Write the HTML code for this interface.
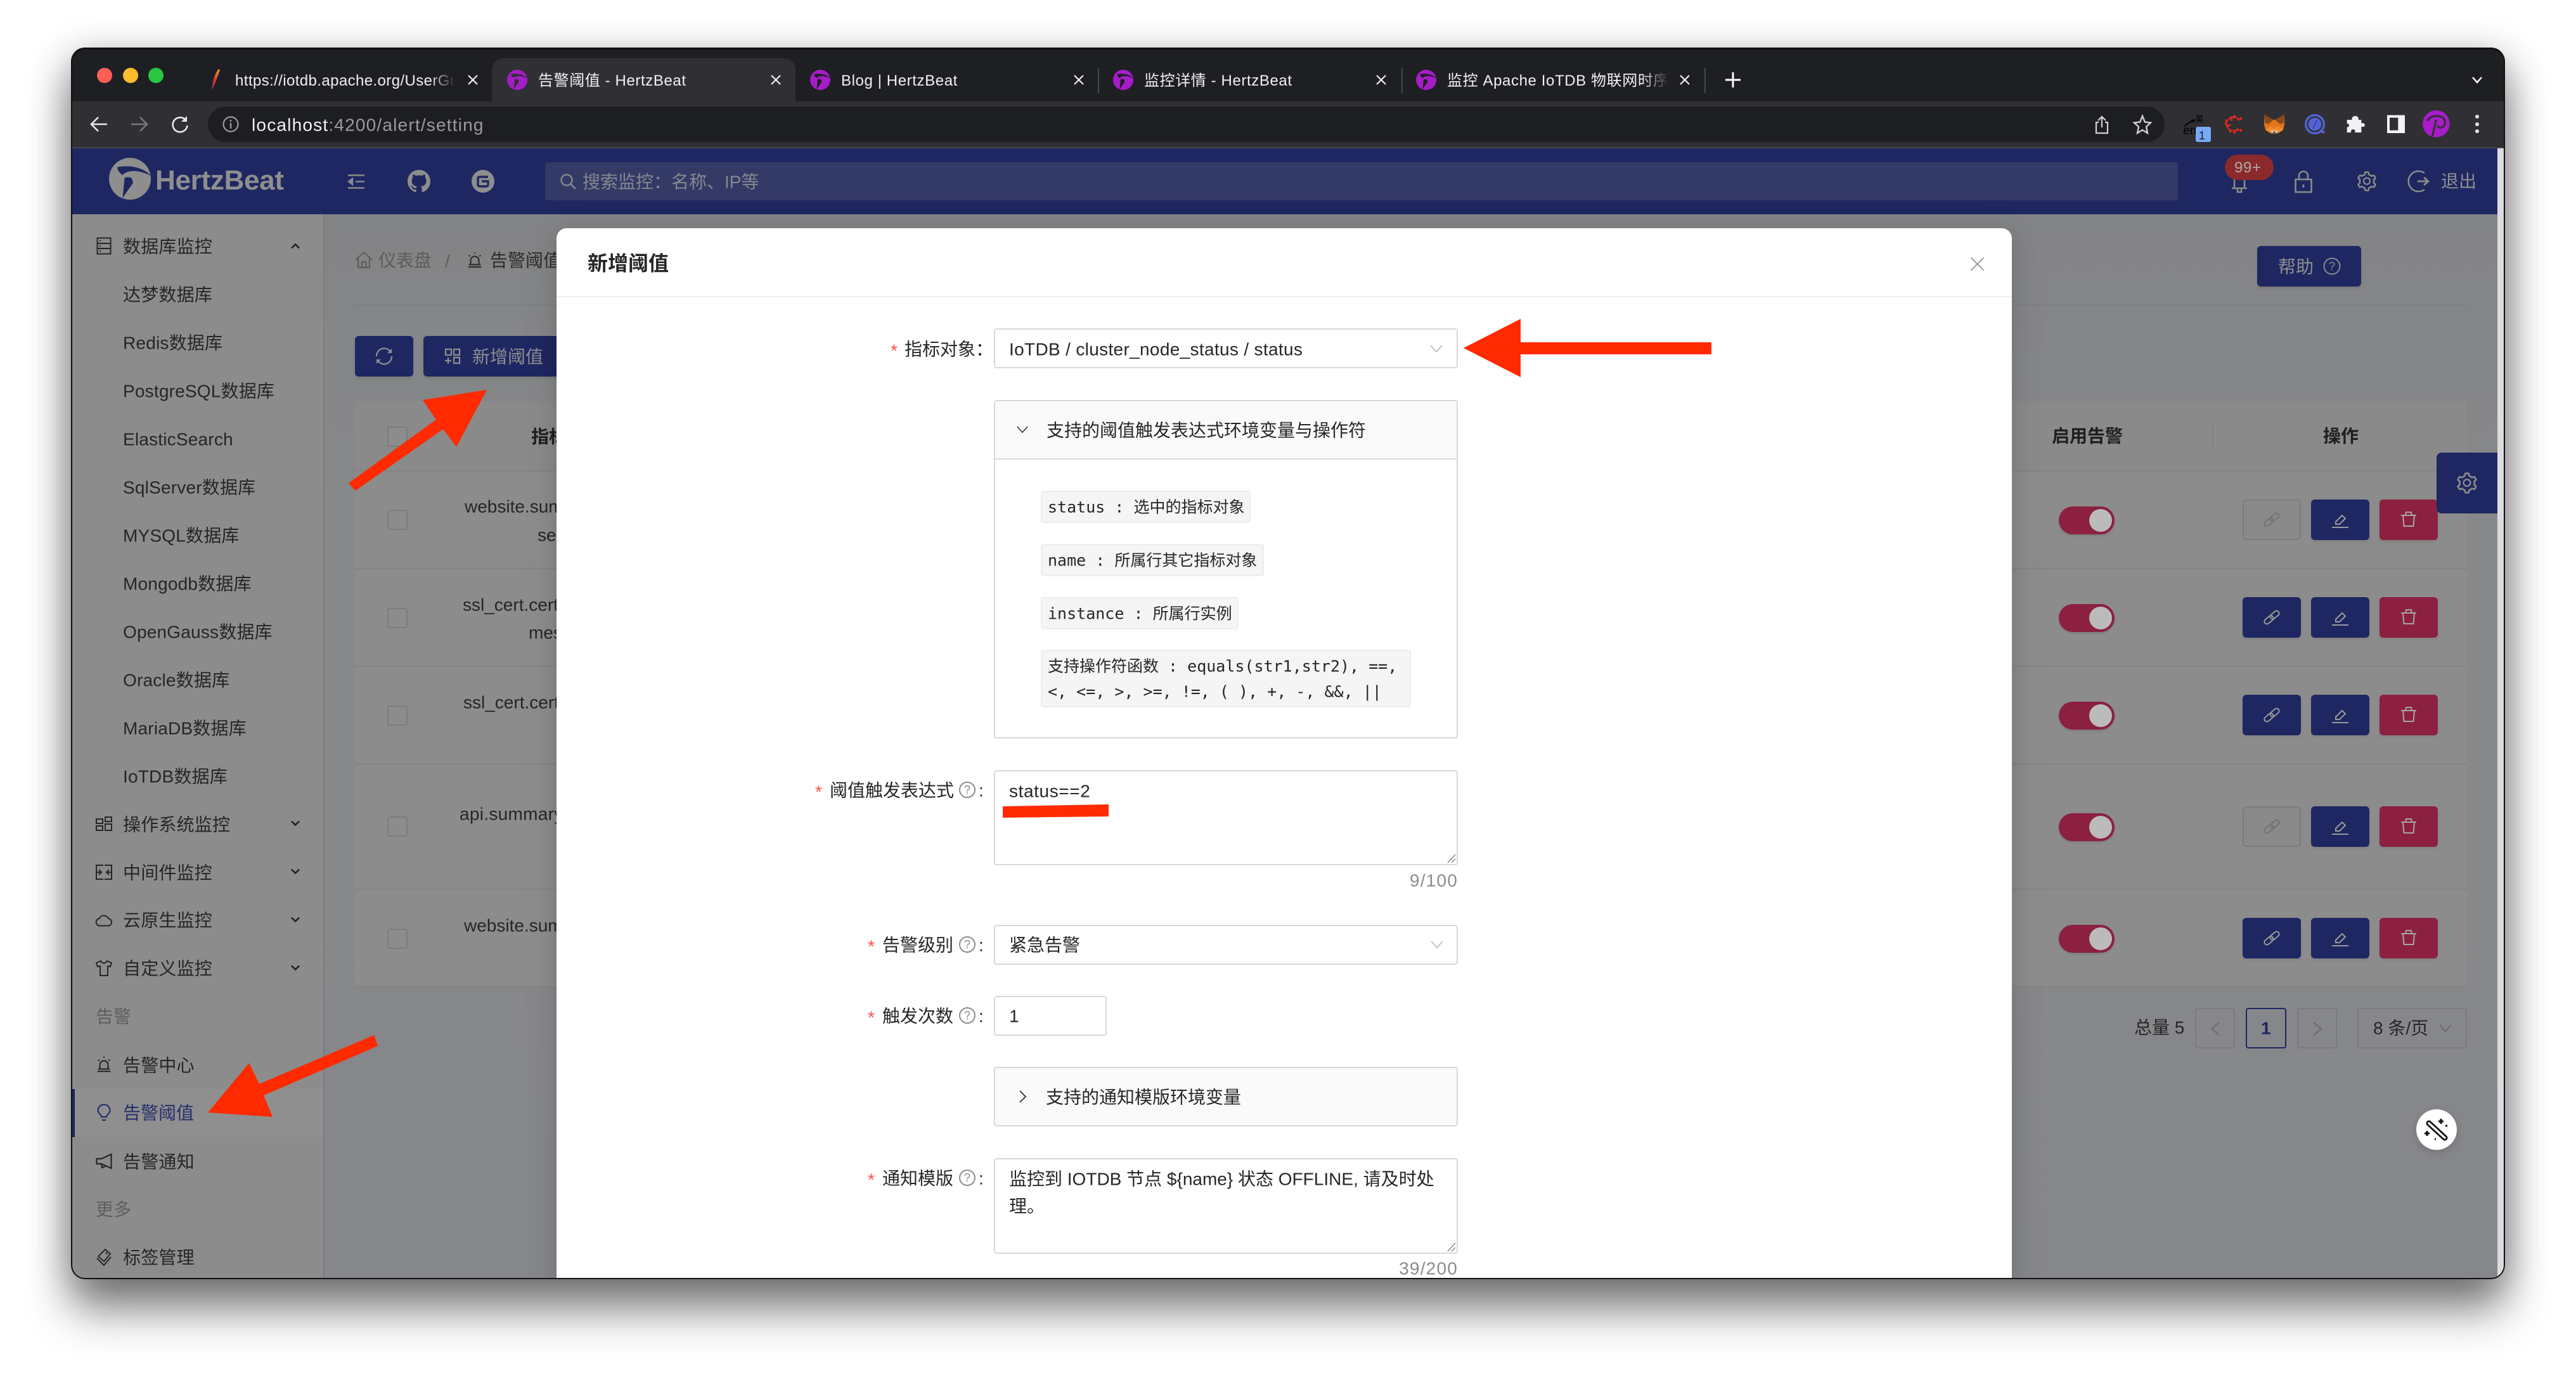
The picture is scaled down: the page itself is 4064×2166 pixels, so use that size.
<!DOCTYPE html>
<html lang="zh-CN">
<head>
<meta charset="utf-8">
<title>告警阈值 - HertzBeat</title>
<style>
html,body{margin:0;padding:0;width:4064px;height:2166px;background:#fff;overflow:hidden}
*{box-sizing:border-box}
body{font-family:"Liberation Sans","Noto Sans CJK SC",sans-serif;font-size:28px;color:#262626}
.shadow{position:absolute;left:112px;top:75px;width:3840px;height:1943px;border-radius:22px;box-shadow:0 50px 70px rgba(0,0,0,.45),0 10px 60px rgba(0,0,0,.28)}
.win{position:absolute;left:0;top:0;width:4064px;height:2166px;clip-path:inset(75px 112px 148px 112px round 22px);overflow:hidden}
.b{position:absolute}
.t{position:absolute;white-space:nowrap;transform:translateY(calc(-50% + 1.5px));line-height:1.3}
.tab{color:#f0f0f0;font-size:24px;letter-spacing:.6px}
.fade{overflow:hidden;-webkit-mask-image:linear-gradient(to right,#000 88%,transparent);mask-image:linear-gradient(to right,#000 88%,transparent)}
.ic{position:absolute;overflow:visible}
.sb{color:#262626;letter-spacing:.2px}
.chk{position:absolute;left:611px;width:32px;height:32px;border:2px solid #7b7b7b;border-radius:4px;background:#8c8c8c}
.line{position:absolute;left:560px;width:3332px;height:2px;background:#838383}
.sw{position:absolute;left:3248px;width:88px;height:44px;border-radius:22px;background:#8c2040;box-shadow:0 2px 3px rgba(0,0,0,.12)}
.sw i{position:absolute;right:4px;top:4px;width:36px;height:36px;border-radius:50%;background:#bbb}
.btn{position:absolute;width:92px;height:64px;border-radius:6px;box-shadow:0 3px 4px rgba(0,0,0,.08)}
.ln{left:3538px;background:#1e2761}.ed{left:3646px;background:#1e2761}.de{left:3754px;background:#8c2040}
.dis{background:#8a8a8a;border:2px solid #7b7b7b;box-shadow:none}
.pg{position:absolute;top:1590px;height:64px;border:2px solid #7b7b7b;border-radius:4px}
.modal{position:absolute;left:878px;top:360px;width:2296px;height:1700px;background:#fff;border-radius:16px;box-shadow:0 12px 48px 16px rgba(0,0,0,.05),0 9px 28px rgba(0,0,0,.08),0 6px 16px -8px rgba(0,0,0,.12)}
.fld{position:absolute;left:1568px;width:732px;background:#fff;border:2px solid #d9d9d9;border-radius:4px}
.star{color:#ff4d4f;font-family:"Liberation Sans",sans-serif}
.q{position:absolute;width:26px;height:26px;border:2px solid #8c8c8c;border-radius:50%;font-size:18px;line-height:22px;text-align:center;color:#8c8c8c}
.code{position:absolute;left:1642px;background:#f5f5f5;border:2px solid #ededed;border-radius:4px}
.m{font-family:"DejaVu Sans Mono","Liberation Mono","Noto Sans CJK SC",monospace;font-size:25px;color:#262626}
.cnt{color:#8c8c8c;letter-spacing:1.2px}
</style>
</head>
<body>
<svg width="0" height="0" style="position:absolute">
<defs>
<symbol id="hb" viewBox="21 26 198 198"><circle cx="120" cy="125" r="99" fill="currentColor"/><path fill="var(--b)" d="M60 70C100 62 170 60 222 112C190 96 150 84 120 90C105 92 90 100 85 108C75 100 62 90 60 70Z"/><path fill="var(--b)" d="M95 120C110 115 125 118 130 125L135 145C125 160 105 185 85 218Z"/></symbol>
<symbol id="gear" viewBox="0 0 1024 1024"><path fill="currentColor" d="M924.8 625.7l-65.5-56c3.1-19 4.7-38.4 4.7-57.8s-1.6-38.8-4.7-57.8l65.5-56a32.03 32.03 0 0 0 9.3-35.2l-.9-2.6a443.74 443.74 0 0 0-79.7-137.9l-1.8-2.1a32.12 32.12 0 0 0-35.1-9.5l-81.3 28.9c-30-24.6-63.5-44-99.7-57.6l-15.7-85a32.05 32.05 0 0 0-25.8-25.7l-2.7-.5c-52.1-9.4-106.9-9.4-159 0l-2.7.5a32.05 32.05 0 0 0-25.8 25.7l-15.8 85.4a351.86 351.86 0 0 0-99 57.4l-81.9-29.1a32 32 0 0 0-35.1 9.5l-1.8 2.1a446.02 446.02 0 0 0-79.7 137.9l-.9 2.6c-4.5 12.5-.8 26.5 9.3 35.2l66.3 56.6c-3.1 18.8-4.6 38-4.6 57.1 0 19.2 1.5 38.4 4.6 57.1L99 625.5a32.03 32.03 0 0 0-9.3 35.2l.9 2.6c18.1 50.4 44.9 96.9 79.7 137.9l1.8 2.1a32.12 32.12 0 0 0 35.1 9.5l81.9-29.1c29.8 24.5 63.1 43.9 99 57.4l15.8 85.4a32.05 32.05 0 0 0 25.8 25.7l2.7.5a449.4 449.4 0 0 0 159 0l2.7-.5a32.05 32.05 0 0 0 25.8-25.7l15.7-85a350 350 0 0 0 99.7-57.6l81.3 28.9a32 32 0 0 0 35.1-9.5l1.8-2.1c34.8-41.1 61.6-87.5 79.7-137.9l.9-2.6c4.5-12.3.8-26.3-9.3-35zM788.3 465.9c2.5 15.1 3.8 30.6 3.8 46.1s-1.3 31-3.8 46.1l-6.6 40.1 74.7 63.9a370.03 370.03 0 0 1-42.6 73.6L721 702.8l-31.4 25.8c-23.9 19.6-50.5 35-79.3 45.8l-38.1 14.3-17.9 97a377.5 377.5 0 0 1-85 0l-17.9-97.2-37.8-14.5c-28.5-10.8-55-26.2-78.7-45.7l-31.4-25.9-93.4 33.2c-17-22.9-31.2-47.6-42.6-73.6l75.5-64.5-6.5-40c-2.4-14.9-3.7-30.3-3.7-45.5 0-15.3 1.2-30.6 3.7-45.5l6.5-40-75.5-64.5c11.3-26.1 25.6-50.7 42.6-73.6l93.4 33.2 31.4-25.9c23.7-19.5 50.2-34.9 78.7-45.7l37.9-14.3 17.9-97.2c28.1-3.2 56.8-3.2 85 0l17.9 97 38.1 14.3c28.7 10.8 55.4 26.2 79.3 45.8l31.4 25.8 92.8-32.9c17 22.9 31.2 47.6 42.6 73.6L781.8 426l6.5 39.9zM512 326c-97.2 0-176 78.8-176 176s78.8 176 176 176 176-78.8 176-176-78.8-176-176-176zm79.2 255.2A111.6 111.6 0 0 1 512 614c-29.9 0-58-11.7-79.2-32.8A111.6 111.6 0 0 1 400 502c0-29.9 11.7-58 32.8-79.2C454 401.6 482.1 390 512 390c29.9 0 58 11.6 79.2 32.8A111.6 111.6 0 0 1 624 502c0 29.9-11.7 58-32.8 79.2z"/></symbol>
<symbol id="gh" viewBox="0 0 16 16"><path fill="currentColor" d="M8 0C3.58 0 0 3.58 0 8c0 3.54 2.29 6.53 5.47 7.59.4.07.55-.17.55-.38 0-.19-.01-.82-.01-1.49-2.01.37-2.53-.49-2.69-.94-.09-.23-.48-.94-.82-1.13-.28-.15-.68-.52-.01-.53.63-.01 1.08.58 1.23.82.72 1.21 1.87.87 2.33.66.07-.52.28-.87.51-1.07-1.78-.2-3.64-.89-3.64-3.95 0-.87.31-1.59.82-2.15-.08-.2-.36-1.02.08-2.12 0 0 .67-.21 2.2.82.64-.18 1.32-.27 2-.27.68 0 1.36.09 2 .27 1.53-1.04 2.2-.82 2.2-.82.44 1.1.16 1.92.08 2.12.51.56.82 1.27.82 2.15 0 3.07-1.87 3.75-3.65 3.95.29.25.54.73.54 1.48 0 1.07-.01 1.93-.01 2.2 0 .21.15.46.55.38A8.013 8.013 0 0016 8c0-4.42-3.58-8-8-8z"/></symbol>
<symbol id="x" viewBox="0 0 16 16"><path d="M1 1L15 15M15 1L1 15" stroke="currentColor" stroke-width="2.2" fill="none"/></symbol>
<symbol id="link" viewBox="0 0 28 28"><g transform="rotate(-40 14 14)" fill="none" stroke="currentColor" stroke-width="2"><rect x="0" y="10" width="16" height="8" rx="4"/><rect x="12" y="10" width="16" height="8" rx="4"/></g></symbol>
<symbol id="edit" viewBox="0 0 28 28"><path d="M7 17L17 7L22 12L13 21H7ZM1 26H27" fill="none" stroke="currentColor" stroke-width="2"/></symbol>
<symbol id="del" viewBox="0 0 28 28"><path d="M5 8H23L21.5 25H6.5ZM2 8H26M9 8L10 3H18L19 8" fill="none" stroke="currentColor" stroke-width="2"/></symbol>
<symbol id="alert" viewBox="0 0 28 28"><path d="M7 22V15A7 7 0 0 1 21 15V22M3 26H25M14 3V1M4 6L6 8M24 6L22 8M4 22H24" fill="none" stroke="currentColor" stroke-width="2.3"/></symbol>
<symbol id="dn" viewBox="0 0 14 9"><path d="M1 1.5L7 7.5L13 1.5" fill="none" stroke="currentColor" stroke-width="2.6"/></symbol>
<symbol id="thin" viewBox="0 0 20 12"><path d="M1 1L10 11L19 1" fill="none" stroke="currentColor" stroke-width="1.8"/></symbol>
<linearGradient id="feather" x1="0" y1="0" x2="0" y2="1"><stop offset="0" stop-color="#f59a2c"/><stop offset=".5" stop-color="#d8382f"/><stop offset="1" stop-color="#6b2a7a"/></linearGradient>
</defs>
</svg>

<div class="shadow"></div>
<div class="win">
  <!-- chrome -->
  <div class="b" style="left:100px;top:70px;width:3860px;height:90px;background:#1e1f23"></div>
  <div class="b" style="left:100px;top:160px;width:3860px;height:74px;background:#302f33"></div>
  <div class="b" style="left:776px;top:92px;width:479px;height:72px;background:#302f33;border-radius:18px 18px 0 0"></div>
  <div class="b" style="left:1732px;top:107px;width:2px;height:40px;background:#47484c"></div>
  <div class="b" style="left:2211px;top:107px;width:2px;height:40px;background:#47484c"></div>
  <div class="b" style="left:2689px;top:107px;width:2px;height:40px;background:#47484c"></div>
  <div class="b" style="left:153px;top:107px;width:24px;height:24px;border-radius:50%;background:#ff5f57"></div>
  <div class="b" style="left:194px;top:107px;width:24px;height:24px;border-radius:50%;background:#febc2e"></div>
  <div class="b" style="left:234px;top:107px;width:24px;height:24px;border-radius:50%;background:#28c840"></div>

  <svg class="ic" style="left:332px;top:108px" width="16" height="36" viewBox="0 0 16 36"><path d="M13 1C7 8 3 20 2 35C6 28 11 14 15 2Z" fill="url(#feather)"/></svg>
  <div class="t tab fade" style="left:371px;top:126px;width:348px;letter-spacing:.4px">https://iotdb.apache.org/UserGuide/</div>
  <svg class="ic" style="left:738px;top:118px;color:#eee" width="16" height="16"><use href="#x"/></svg>

  <svg class="ic" style="left:800px;top:110px;color:#a71cc9;--b:#302f33" width="32" height="32"><use href="#hb"/></svg>
  <div class="t tab" style="left:849px;top:126px">告警阈值 - HertzBeat</div>
  <svg class="ic" style="left:1216px;top:118px;color:#eee" width="16" height="16"><use href="#x"/></svg>

  <svg class="ic" style="left:1278px;top:110px;color:#a71cc9;--b:#1e1f23" width="32" height="32"><use href="#hb"/></svg>
  <div class="t tab" style="left:1327px;top:126px">Blog | HertzBeat</div>
  <svg class="ic" style="left:1694px;top:118px;color:#eee" width="16" height="16"><use href="#x"/></svg>

  <svg class="ic" style="left:1756px;top:110px;color:#a71cc9;--b:#1e1f23" width="32" height="32"><use href="#hb"/></svg>
  <div class="t tab" style="left:1805px;top:126px">监控详情 - HertzBeat</div>
  <svg class="ic" style="left:2171px;top:118px;color:#eee" width="16" height="16"><use href="#x"/></svg>

  <svg class="ic" style="left:2234px;top:110px;color:#a71cc9;--b:#1e1f23" width="32" height="32"><use href="#hb"/></svg>
  <div class="t tab fade" style="left:2283px;top:126px;width:350px">监控 Apache IoTDB 物联网时序数据库</div>
  <svg class="ic" style="left:2650px;top:118px;color:#eee" width="16" height="16"><use href="#x"/></svg>

  <svg class="ic" style="left:2722px;top:114px" width="24" height="24"><path d="M12 0V24M0 12H24" stroke="#fff" stroke-width="3"/></svg>
  <svg class="ic" style="left:3900px;top:121px" width="16" height="10"><path d="M1 1L8 9L15 1" fill="none" stroke="#fff" stroke-width="2.4"/></svg>

  <!-- toolbar -->
  <svg class="ic" style="left:142px;top:183px" width="28" height="26"><path d="M27 13H3M13 2L2 13L13 24" fill="none" stroke="#e8e8e8" stroke-width="2.6"/></svg>
  <svg class="ic" style="left:206px;top:183px" width="28" height="26"><path d="M1 13H25M15 2L26 13L15 24" fill="none" stroke="#7a7a7c" stroke-width="2.6"/></svg>
  <svg class="ic" style="left:270px;top:182px" width="28" height="28"><path d="M24 9A11.5 11.5 0 1 0 25.5 16" fill="none" stroke="#e8e8e8" stroke-width="2.6"/><path d="M25 1V10H16" fill="#e8e8e8"/></svg>
  <div class="b" style="left:328px;top:168px;width:3087px;height:56px;border-radius:28px;background:#1d1e21"></div>
  <svg class="ic" style="left:351px;top:183px" width="26" height="26"><circle cx="13" cy="13" r="11.5" fill="none" stroke="#9a9a9c" stroke-width="2.2"/><path d="M13 11V20M13 6V9" stroke="#9a9a9c" stroke-width="2.4"/></svg>
  <div class="t" style="left:397px;top:196px;font-size:28px;letter-spacing:1.2px;color:#f2f2f2">localhost<span style="color:#9b9b9d">:4200/alert/setting</span></div>
  <svg class="ic" style="left:3305px;top:182px" width="22" height="30"><path d="M6 11H2V28H20V11H16M11 19V2M5 8L11 2L17 8" fill="none" stroke="#d0d0d0" stroke-width="2.2"/></svg>
  <svg class="ic" style="left:3366px;top:181px" width="28" height="30" viewBox="0 0 28 30"><path d="M14 2L17.8 11.5L27 12.5L20 19L22 29L14 24L6 29L8 19L1 12.5L10.2 11.5Z" fill="none" stroke="#d0d0d0" stroke-width="2.4"/></svg>

  <!-- extension icons, drawn in 3x crop coords of (3430,165) -->
  <svg class="ic" style="left:3430px;top:165px" width="450" height="65" viewBox="0 0 1350 195">
    <path d="M50 102C60 90 75 82 95 74" fill="none" stroke="#000" stroke-width="6"/><path d="M100 70L80 72L92 88Z" fill="#000"/>
    <text x="100" y="82" font-size="40" fill="#000" font-family="Noto Sans CJK SC">英</text>
    <text x="42" y="141" font-size="58" fill="#000" font-family="Liberation Sans">en</text>
    <rect x="102" y="105" width="72" height="72" rx="9" fill="#78a9f8"/>
    <text x="132" y="165" font-size="56" fill="#222" text-anchor="middle" font-family="Liberation Sans">1</text>
    <path d="M305 65C270 55 245 70 247 95C248 115 265 128 315 120M262 62L287 55M270 95L250 100M285 130L300 118" fill="none" stroke="#e0281f" stroke-width="5"/>
    <g fill="#e0281f"><circle cx="247" cy="76" r="6"/><circle cx="268" cy="62" r="6"/><circle cx="287" cy="55" r="6"/><circle cx="304" cy="70" r="6"/><circle cx="316" cy="66" r="6"/><circle cx="258" cy="100" r="6"/><circle cx="246" cy="90" r="6"/><circle cx="265" cy="126" r="6"/><circle cx="285" cy="132" r="6"/><circle cx="300" cy="118" r="6"/><circle cx="316" cy="122" r="6"/><circle cx="272" cy="72" r="5"/></g>
    <path d="M427 48L470 72H478L521 48L522 95L516 120L490 136H458L432 120L426 95Z" fill="#e2761b"/>
    <path d="M427 48L470 72L448 92L430 88ZM521 48L478 72L500 92L518 88Z" fill="#8a4a1c"/>
    <path d="M432 120L456 102L474 112L492 102L516 120L490 136H458Z" fill="#f08a2c"/>
    <path d="M456 122H492L484 134H464Z" fill="#dcc6ae"/><path d="M468 128H480L474 136Z" fill="#222"/>
    <circle cx="666" cy="93" r="43" fill="none" stroke="#5163d6" stroke-width="10"/>
    <circle cx="666" cy="93" r="31" fill="#5163d6"/>
    <path d="M657 112L675 75" stroke="#22264a" stroke-width="3"/>
    <path d="M690 126L712 132" stroke="#5163d6" stroke-width="10"/>
    <path d="M818 72H842C835 50 878 46 872 72H886V88C908 82 908 112 886 104V132H856C862 112 832 112 838 132H818V106C830 110 832 88 818 90Z" fill="#f2f2f4"/>
    <path d="M1008 50H1092V135H1008ZM1020 62V122H1060V62Z" fill="#f2f3f5" fill-rule="evenodd"/>
    <circle cx="1240" cy="91" r="64" fill="#a81dc7"/>
    <path d="M1198 78C1210 45 1280 45 1282 82C1284 108 1255 118 1246 100M1240 72L1222 150" fill="none" stroke="#302f33" stroke-width="9"/>
  </svg>
  <div class="b" style="left:3905px;top:181px;width:6px;height:6px;border-radius:50%;background:#e8e8e8"></div>
  <div class="b" style="left:3905px;top:193px;width:6px;height:6px;border-radius:50%;background:#e8e8e8"></div>
  <div class="b" style="left:3905px;top:204px;width:6px;height:6px;border-radius:50%;background:#e8e8e8"></div>

  <!-- top nav -->
  <div class="b" style="left:100px;top:232px;width:3860px;height:2px;background:#47474c"></div>
  <div class="b" style="left:100px;top:234px;width:3840px;height:104px;background:#1e2761"></div>
  <svg class="ic" style="left:172px;top:249px;color:#8e8e8e;--b:#1e2761" width="66" height="66"><use href="#hb"/></svg>
  <div class="t" style="left:245px;top:283px;font-size:44px;font-weight:bold;color:#8e8e8e;letter-spacing:-.3px">HertzBeat</div>
  <svg class="ic" style="left:549px;top:275px" width="26" height="23"><path d="M0 1.5H26M12 11.5H26M0 21.5H26M7 7L1 11.5L7 16Z" fill="#8a8a8a" stroke="#8a8a8a" stroke-width="2.4"/></svg>
  <svg class="ic" style="left:643px;top:268px;color:#8e8e8e" width="36" height="36"><use href="#gh"/></svg>
  <svg class="ic" style="left:744px;top:268px" width="36" height="36"><circle cx="18" cy="18" r="18" fill="#8e8e8e"/><path d="M26 11H13Q10 11 10 14V23Q10 26 13 26H23Q26 26 26 23V18H16" fill="none" stroke="#1e2761" stroke-width="3.4"/></svg>
  <div class="b" style="left:860px;top:256px;width:2576px;height:60px;background:#343a66;border-radius:4px"></div>
  <svg class="ic" style="left:884px;top:274px" width="25" height="25"><circle cx="10" cy="10" r="8.5" fill="none" stroke="#85878f" stroke-width="2.4"/><path d="M16 16L24 24" stroke="#85878f" stroke-width="2.4"/></svg>
  <div class="t" style="left:919px;top:286px;color:#85878f">搜索监控：名称、IP等</div>
  <svg class="ic" style="left:3519px;top:270px" width="28" height="36" viewBox="0 0 28 36"><path d="M6 27V10A8 8 0 0 1 22 10V27M2 27H26M11 27V33H17V27" fill="none" stroke="#8a8a8a" stroke-width="2.6"/></svg>
  <div class="b" style="left:3510px;top:244px;width:77px;height:40px;border-radius:20px;background:#8b2a2c"></div>
  <div class="t" style="left:3525px;top:263px;font-size:24px;letter-spacing:.6px;color:#ababab">99+</div>
  <svg class="ic" style="left:3620px;top:269px" width="28" height="36" viewBox="0 0 28 36"><rect x="1.5" y="14" width="25" height="20" fill="none" stroke="#8a8a8a" stroke-width="2.6"/><path d="M7 14V8A7 6.5 0 0 1 21 8V14M14 22V27" fill="none" stroke="#8a8a8a" stroke-width="2.6"/></svg>
  <svg class="ic" style="left:3716px;top:268px;color:#8a8a8a" width="36" height="36"><use href="#gear"/></svg>
  <svg class="ic" style="left:3800px;top:268px" width="36" height="36"><path d="M25 5A16 16 0 1 0 25 31" fill="none" stroke="#8a8a8a" stroke-width="2.6"/><path d="M14 18H30M24 12L31 18L24 24" fill="none" stroke="#8a8a8a" stroke-width="2.8"/></svg>
  <div class="t" style="left:3851px;top:285px;color:#8e8e8e">退出</div>
  <div class="b" style="left:3940px;top:234px;width:14px;height:1800px;background:#dcdce0"></div>

  <!-- sidebar -->
  <div class="b" style="left:100px;top:338px;width:410px;height:1700px;background:#8c8c8c"></div>
  <div class="b" style="left:510px;top:338px;width:2px;height:1700px;background:#7e7c7c"></div>
  <div class="b" style="left:512px;top:338px;width:3428px;height:1700px;background:linear-gradient(#838486,#87888a 30%,#86878a)"></div>

  <svg class="ic" style="left:152px;top:374px" width="24" height="28" viewBox="0 0 24 28"><path d="M1.5 1.5H22.5V26.5H1.5ZM1.5 10H22.5M1.5 18H22.5M5 6H7M5 14H7M5 22H7" fill="none" stroke="#262626" stroke-width="2"/></svg>
  <div class="t sb" style="left:194px;top:388px">数据库监控</div>
  <svg class="ic" style="left:459px;top:384px;color:#222;transform:rotate(180deg)" width="14" height="9"><use href="#dn"/></svg>
  <div class="t sb" style="left:194px;top:464px">达梦数据库</div>
  <div class="t sb" style="left:194px;top:540px">Redis数据库</div>
  <div class="t sb" style="left:194px;top:616px">PostgreSQL数据库</div>
  <div class="t sb" style="left:194px;top:692px">ElasticSearch</div>
  <div class="t sb" style="left:194px;top:768px">SqlServer数据库</div>
  <div class="t sb" style="left:194px;top:844px">MYSQL数据库</div>
  <div class="t sb" style="left:194px;top:920px">Mongodb数据库</div>
  <div class="t sb" style="left:194px;top:996px">OpenGauss数据库</div>
  <div class="t sb" style="left:194px;top:1072px">Oracle数据库</div>
  <div class="t sb" style="left:194px;top:1148px">MariaDB数据库</div>
  <div class="t sb" style="left:194px;top:1224px">IoTDB数据库</div>

  <svg class="ic" style="left:151px;top:1288px" width="26" height="24" viewBox="0 0 26 24"><path d="M1 4H11V11H1ZM15 1H25V8H15ZM1 15H11V22H1ZM15 12H25V22H15Z" fill="none" stroke="#262626" stroke-width="2"/></svg>
  <div class="t sb" style="left:194px;top:1300px">操作系统监控</div>
  <svg class="ic" style="left:459px;top:1294px;color:#222" width="14" height="9"><use href="#dn"/></svg>
  <svg class="ic" style="left:151px;top:1364px" width="26" height="24" viewBox="0 0 26 24"><path d="M12 1H1V23H12M14 1H25V23H14M1 12H8M5 8L9 12L5 16M25 12H18M21 8L17 12L21 16" fill="none" stroke="#262626" stroke-width="2"/></svg>
  <div class="t sb" style="left:194px;top:1376px">中间件监控</div>
  <svg class="ic" style="left:459px;top:1370px;color:#222" width="14" height="9"><use href="#dn"/></svg>
  <svg class="ic" style="left:150px;top:1442px" width="28" height="20" viewBox="0 0 28 20"><path d="M7 18.5A5.8 5.8 0 0 1 6.5 7A8 8 0 0 1 21 7A5.8 5.8 0 0 1 21 18.5Z" fill="none" stroke="#262626" stroke-width="2"/></svg>
  <div class="t sb" style="left:194px;top:1451px">云原生监控</div>
  <svg class="ic" style="left:459px;top:1446px;color:#222" width="14" height="9"><use href="#dn"/></svg>
  <svg class="ic" style="left:151px;top:1515px" width="26" height="25" viewBox="0 0 26 25"><path d="M8 1L1 4L3 10L7 9V24H19V9L23 10L25 4L18 1Q13 8 8 1Z" fill="none" stroke="#262626" stroke-width="2"/></svg>
  <div class="t sb" style="left:194px;top:1527px">自定义监控</div>
  <svg class="ic" style="left:459px;top:1522px;color:#222" width="14" height="9"><use href="#dn"/></svg>
  <div class="t" style="left:151px;top:1603px;color:#5e5e5e">告警</div>
  <svg class="ic" style="left:151px;top:1665px;color:#262626" width="26" height="28"><use href="#alert"/></svg>
  <div class="t sb" style="left:194px;top:1680px">告警中心</div>
  <div class="b" style="left:112px;top:1718px;width:398px;height:76px;background:#8f8f8f"></div>
  <div class="b" style="left:112px;top:1718px;width:6px;height:76px;background:#1e2761"></div>
  <svg class="ic" style="left:153px;top:1742px" width="22" height="28" viewBox="0 0 22 28"><path d="M7 20C7 16 1.5 15 1.5 10A9.5 9.5 0 0 1 20.5 10C20.5 15 15 16 15 20ZM8 25H14" fill="none" stroke="#252f6c" stroke-width="2.2"/></svg>
  <div class="t" style="left:194px;top:1755px;color:#252f6c">告警阈值</div>
  <svg class="ic" style="left:151px;top:1819px" width="26" height="26" viewBox="0 0 26 26"><path d="M24.5 2V24L9 17H1.5V9H9ZM9 17L10 23L15 21" fill="none" stroke="#262626" stroke-width="2.2"/></svg>
  <div class="t sb" style="left:194px;top:1832px">告警通知</div>
  <div class="t" style="left:151px;top:1907px;color:#5e5e5e">更多</div>
  <svg class="ic" style="left:152px;top:1970px" width="24" height="28" viewBox="0 0 24 28"><path d="M14 1L22 8L12 20L3 12ZM1 15L12 26L23 13" fill="none" stroke="#262626" stroke-width="2"/><circle cx="16" cy="7" r="1.5" fill="#262626"/></svg>
  <div class="t sb" style="left:194px;top:1983px">标签管理</div>

  <!-- main -->
  <svg class="ic" style="left:560px;top:396px" width="28" height="28" viewBox="0 0 28 28"><path d="M1 14L14 2L27 14M5 11V26H23V11M11 26V17H17V26" fill="none" stroke="#5e5e5e" stroke-width="2.2"/></svg>
  <div class="t" style="left:597px;top:410px;color:#5c5c5c">仪表盘</div>
  <div class="t" style="left:702px;top:411px;color:#5c5c5c">/</div>
  <svg class="ic" style="left:736px;top:396px;color:#2c2c2c" width="26" height="28"><use href="#alert"/></svg>
  <div class="t" style="left:773px;top:410px;color:#2c2c2c">告警阈值</div>
  <div class="b" style="left:560px;top:480px;width:3332px;height:2px;background:#7e7f81"></div>
  <div class="b" style="left:3561px;top:388px;width:164px;height:64px;background:#1e2761;border-radius:6px;box-shadow:0 3px 4px rgba(0,0,0,.1)"></div>
  <div class="t" style="left:3594px;top:420px;color:#8e8e8e">帮助</div>
  <svg class="ic" style="left:3665px;top:406px" width="28" height="28"><circle cx="14" cy="14" r="12.5" fill="none" stroke="#8a8a8a" stroke-width="2"/><text x="14" y="20" font-size="18" text-anchor="middle" fill="#8a8a8a" font-family="Liberation Sans">?</text></svg>

  <div class="b" style="left:560px;top:530px;width:92px;height:64px;background:#1e2761;border-radius:6px;box-shadow:0 3px 4px rgba(0,0,0,.1)"></div>
  <svg class="ic" style="left:592px;top:548px" width="28" height="28" viewBox="0 0 28 28"><path d="M2 14A12 12 0 0 1 24 7M26 14A12 12 0 0 1 4 21" fill="none" stroke="#8e8e8e" stroke-width="2.2"/><path d="M26 2V9H19M2 26V19H9" fill="#8e8e8e"/></svg>
  <div class="b" style="left:668px;top:530px;width:300px;height:64px;background:#1e2761;border-radius:6px;box-shadow:0 3px 4px rgba(0,0,0,.1)"></div>
  <svg class="ic" style="left:701px;top:550px" width="25" height="25" viewBox="0 0 25 25"><path d="M2 1H11V10H2ZM15 1H24V10H15ZM15 14H24V23H15ZM1 19H11M6 14V24" fill="none" stroke="#8e8e8e" stroke-width="2.2"/></svg>
  <div class="t" style="left:745px;top:562px;color:#8e8e8e">新增阈值</div>

  <!-- table -->
  <div class="b" style="left:560px;top:633px;width:3332px;height:924px;background:#8c8c8c"></div>
  <div class="b" style="left:560px;top:633px;width:3332px;height:110px;background:#8a8a8a"></div>
  <div class="line" style="top:742px"></div>
  <div class="line" style="top:896px"></div>
  <div class="line" style="top:1050px"></div>
  <div class="line" style="top:1204px"></div>
  <div class="line" style="top:1402px"></div>
  <div class="line" style="top:1556px"></div>
  <div class="chk" style="top:673px"></div>
  <div class="chk" style="top:804px"></div>
  <div class="chk" style="top:959px"></div>
  <div class="chk" style="top:1113px"></div>
  <div class="chk" style="top:1288px"></div>
  <div class="chk" style="top:1465px"></div>
  <div class="t" style="left:838px;top:688px;font-weight:bold;color:#1f1f1f">指标对象</div>
  <div class="t" style="left:733px;top:798px">website.summary</div>
  <div class="t" style="left:848px;top:843px">second</div>
  <div class="t" style="left:730px;top:953px">ssl_cert.certificate</div>
  <div class="t" style="left:834px;top:997px">message</div>
  <div class="t" style="left:731px;top:1107px">ssl_cert.certificate</div>
  <div class="t" style="left:725px;top:1283px;letter-spacing:.3px">api.summary</div>
  <div class="t" style="left:732px;top:1459px">website.summary</div>
  <div class="t" style="left:3237px;top:687px;font-weight:bold;color:#1f1f1f">启用告警</div>
  <div class="b" style="left:3490px;top:666px;width:2px;height:44px;background:#838383"></div>
  <div class="t" style="left:3665px;top:687px;font-weight:bold;color:#1f1f1f">操作</div>

  <div class="sw" style="top:799px"><i></i></div>
  <div class="sw" style="top:953px"><i></i></div>
  <div class="sw" style="top:1107px"><i></i></div>
  <div class="sw" style="top:1283px"><i></i></div>
  <div class="sw" style="top:1459px"><i></i></div>

  <div class="btn ln dis" style="top:788px"><svg class="ic" style="left:30px;top:16px;color:#727272" width="28" height="28"><use href="#link"/></svg></div>
  <div class="btn ed" style="top:788px"><svg class="ic" style="left:32px;top:18px;color:#9a9a9a" width="28" height="28"><use href="#edit"/></svg></div>
  <div class="btn de" style="top:788px"><svg class="ic" style="left:32px;top:17px;color:#a5a5a5" width="28" height="28"><use href="#del"/></svg></div>

  <div class="btn ln" style="top:942px"><svg class="ic" style="left:32px;top:18px;color:#9a9a9a" width="28" height="28"><use href="#link"/></svg></div>
  <div class="btn ed" style="top:942px"><svg class="ic" style="left:32px;top:18px;color:#9a9a9a" width="28" height="28"><use href="#edit"/></svg></div>
  <div class="btn de" style="top:942px"><svg class="ic" style="left:32px;top:17px;color:#a5a5a5" width="28" height="28"><use href="#del"/></svg></div>

  <div class="btn ln" style="top:1096px"><svg class="ic" style="left:32px;top:18px;color:#9a9a9a" width="28" height="28"><use href="#link"/></svg></div>
  <div class="btn ed" style="top:1096px"><svg class="ic" style="left:32px;top:18px;color:#9a9a9a" width="28" height="28"><use href="#edit"/></svg></div>
  <div class="btn de" style="top:1096px"><svg class="ic" style="left:32px;top:17px;color:#a5a5a5" width="28" height="28"><use href="#del"/></svg></div>

  <div class="btn ln dis" style="top:1272px"><svg class="ic" style="left:30px;top:16px;color:#727272" width="28" height="28"><use href="#link"/></svg></div>
  <div class="btn ed" style="top:1272px"><svg class="ic" style="left:32px;top:18px;color:#9a9a9a" width="28" height="28"><use href="#edit"/></svg></div>
  <div class="btn de" style="top:1272px"><svg class="ic" style="left:32px;top:17px;color:#a5a5a5" width="28" height="28"><use href="#del"/></svg></div>

  <div class="btn ln" style="top:1448px"><svg class="ic" style="left:32px;top:18px;color:#9a9a9a" width="28" height="28"><use href="#link"/></svg></div>
  <div class="btn ed" style="top:1448px"><svg class="ic" style="left:32px;top:18px;color:#9a9a9a" width="28" height="28"><use href="#edit"/></svg></div>
  <div class="btn de" style="top:1448px"><svg class="ic" style="left:32px;top:17px;color:#a5a5a5" width="28" height="28"><use href="#del"/></svg></div>

  <div class="b" style="left:3844px;top:714px;width:96px;height:96px;background:#1e2761;border-radius:8px 0 0 8px"></div>
  <svg class="ic" style="left:3873px;top:743px;color:#8a8a8a" width="38" height="38"><use href="#gear"/></svg>

  <div class="t" style="left:3367px;top:1620px">总量 5</div>
  <div class="pg" style="left:3463px;width:63px"></div>
  <svg class="ic" style="left:3488px;top:1612px" width="14" height="22"><path d="M13 1L1 11L13 21" fill="none" stroke="#6e6e6e" stroke-width="2.2"/></svg>
  <div class="pg" style="left:3543px;width:64px;border-color:#1e2761"></div>
  <div class="t" style="left:3567px;top:1621px;color:#1e2761;font-weight:bold">1</div>
  <div class="pg" style="left:3624px;width:63px"></div>
  <svg class="ic" style="left:3649px;top:1612px" width="14" height="22"><path d="M1 1L13 11L1 21" fill="none" stroke="#6e6e6e" stroke-width="2.2"/></svg>
  <div class="pg" style="left:3719px;width:173px"></div>
  <div class="t" style="left:3744px;top:1621px">8 条/页</div>
  <svg class="ic" style="left:3848px;top:1616px;color:#6a6a6a" width="20" height="12"><use href="#thin"/></svg>

  <div class="b" style="left:3812px;top:1750px;width:64px;height:64px;border-radius:50%;background:#fff;box-shadow:0 4px 12px rgba(0,0,0,.15)"></div>
  <svg class="ic" style="left:3824px;top:1762px" width="40" height="40" viewBox="0 0 40 40"><path d="M8 10L33 33" stroke="#111" stroke-width="9" stroke-linecap="round"/><path d="M8 10L33 33" stroke="#fff" stroke-width="3.5" stroke-linecap="round"/><path d="M27 3V11M23 7H31M5 22V30M1 26H9M34 14H37M17 35H19" stroke="#111" stroke-width="3"/></svg>

  <!-- modal -->
  <div class="modal"></div>
  <div class="t" style="left:927px;top:415px;font-size:32px;font-weight:bold;color:#262626">新增阈值</div>
  <svg class="ic" style="left:3108px;top:405px;color:#999" width="23" height="23" viewBox="0 0 16 16"><path d="M1 1L15 15M15 1L1 15" stroke="#999" stroke-width="1.3" fill="none"/></svg>
  <div class="b" style="left:878px;top:467px;width:2296px;height:2px;background:#f0f0f0"></div>

  <div class="t star" style="left:1405px;top:552px">*</div>
  <div class="t" style="left:1427px;top:550px">指标对象：</div>
  <div class="fld" style="top:518px;height:63px"></div>
  <div class="t" style="left:1592px;top:550px;font-size:28px;letter-spacing:.33px">IoTDB / cluster_node_status / status</div>
  <svg class="ic" style="left:2256px;top:544px;color:#bfbfbf" width="20" height="12"><use href="#thin"/></svg>

  <div class="fld" style="top:631px;height:534px"></div>
  <div class="b" style="left:1570px;top:633px;width:728px;height:92px;background:#fafafa;border-bottom:2px solid #d9d9d9"></div>
  <svg class="ic" style="left:1604px;top:672px;color:#333" width="18" height="11"><use href="#thin"/></svg>
  <div class="t" style="left:1651px;top:678px">支持的阈值触发表达式环境变量与操作符</div>

  <div class="code" style="top:774px;width:331px;height:51px"></div>
  <div class="t m" style="left:1653px;top:799px">status : 选中的指标对象</div>
  <div class="code" style="top:858px;width:352px;height:51px"></div>
  <div class="t m" style="left:1653px;top:883px">name : 所属行其它指标对象</div>
  <div class="code" style="top:942px;width:312px;height:51px"></div>
  <div class="t m" style="left:1653px;top:967px">instance : 所属行实例</div>
  <div class="code" style="top:1025px;width:584px;height:91px"></div>
  <div class="t m" style="left:1653px;top:1050px">支持操作符函数 : equals(str1,str2), ==,</div>
  <div class="t m" style="left:1653px;top:1090px">&lt;, &lt;=, &gt;, &gt;=, !=, ( ), +, -, &amp;&amp;, ||</div>

  <div class="t star" style="left:1286px;top:1248px">*</div>
  <div class="t" style="left:1309px;top:1246px">阈值触发表达式</div>
  <div class="q" style="left:1513px;top:1233px">?</div>
  <div class="t" style="left:1544px;top:1246px">:</div>
  <div class="fld" style="top:1215px;height:150px"></div>
  <div class="t" style="left:1592px;top:1247px;font-size:28px;letter-spacing:.6px">status==2</div>
  <svg class="ic" style="left:2283px;top:1347px" width="14" height="15"><path d="M1 14L13 1M7 14L13 8" stroke="#888" stroke-width="1.5"/></svg>
  <div class="t cnt" style="right:1764px;top:1388px">9/100</div>

  <div class="t star" style="left:1369px;top:1492px">*</div>
  <div class="t" style="left:1392px;top:1490px">告警级别</div>
  <div class="q" style="left:1513px;top:1477px">?</div>
  <div class="t" style="left:1544px;top:1490px">:</div>
  <div class="fld" style="top:1459px;height:63px"></div>
  <div class="t" style="left:1592px;top:1490px">紧急告警</div>
  <svg class="ic" style="left:2257px;top:1484px;color:#bfbfbf" width="20" height="12"><use href="#thin"/></svg>

  <div class="t star" style="left:1369px;top:1604px">*</div>
  <div class="t" style="left:1392px;top:1602px">触发次数</div>
  <div class="q" style="left:1513px;top:1589px">?</div>
  <div class="t" style="left:1544px;top:1602px">:</div>
  <div class="fld" style="top:1571px;height:63px;width:178px"></div>
  <div class="t" style="left:1592px;top:1602px">1</div>

  <div class="fld" style="top:1683px;height:94px;background:#fafafa"></div>
  <svg class="ic" style="left:1608px;top:1720px" width="11" height="20"><path d="M1 1L10 10L1 19" fill="none" stroke="#333" stroke-width="1.8"/></svg>
  <div class="t" style="left:1650px;top:1730px">支持的通知模版环境变量</div>

  <div class="t star" style="left:1369px;top:1860px">*</div>
  <div class="t" style="left:1392px;top:1858px">通知模版</div>
  <div class="q" style="left:1513px;top:1845px">?</div>
  <div class="t" style="left:1544px;top:1858px">:</div>
  <div class="fld" style="top:1827px;height:151px"></div>
  <div class="t" style="left:1592px;top:1859px;font-size:28px">监控到 IOTDB 节点 ${name} 状态 OFFLINE, 请及时处</div>
  <div class="t" style="left:1592px;top:1902px;font-size:28px">理。</div>
  <svg class="ic" style="left:2283px;top:1960px" width="14" height="15"><path d="M1 14L13 1M7 14L13 8" stroke="#888" stroke-width="1.5"/></svg>
  <div class="t cnt" style="right:1764px;top:2000px">39/200</div>

  <!-- red annotations -->
  <svg class="ic" style="left:0;top:0" width="4064" height="2166" viewBox="0 0 4064 2166">
    <polygon fill="#ff2a00" points="2309,549 2399,503 2399,540 2700,540 2700,559 2399,559 2399,595"/>
    <polygon fill="#ff2a00" points="550,762 688,662 667,631 768,615 720,705 699,677 561,774"/>
    <polygon fill="#ff2a00" points="328,1755 393,1677 409,1710 590,1633 596,1650 416,1728 430,1762"/>
    <polygon fill="#ff2a00" points="1582,1272 1749,1269 1749,1288 1582,1290"/>
  </svg>

  <div class="b" style="left:112px;top:75px;width:3840px;height:1943px;border:2px solid #101010;border-radius:22px;border-top-width:3px"></div>
</div>
</body>
</html>
